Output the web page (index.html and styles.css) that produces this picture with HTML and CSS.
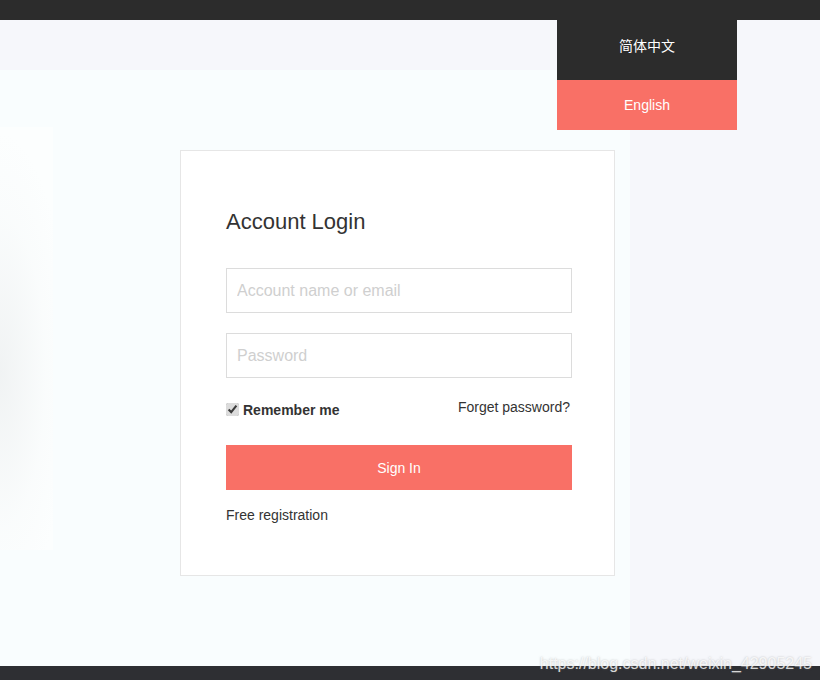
FILE: index.html
```html
<!DOCTYPE html>
<html lang="en">
<head>
<meta charset="utf-8">
<title>Account Login</title>
<link rel="stylesheet" href="styles.css">
</head>
<body>
<div class="topbar"></div>
<div class="page">
  <div class="header"></div>
  <div class="body-row">
    <main class="stage">
      <div class="deco"></div>
      <form class="card">
        <h1 class="title">Account Login</h1>
        <input class="field" type="text" placeholder="Account name or email">
        <input class="field" type="password" placeholder="Password">
        <div class="options">
          <label class="remember"><input type="checkbox" checked> Remember me</label>
          <a class="forget" href="#">Forget password?</a>
        </div>
        <button class="signin" type="button">Sign In</button>
        <a class="register" href="#">Free registration</a>
      </form>
    </main>
    <aside class="side"></aside>
  </div>
  <ul class="lang-menu">
    <li class="lang">简体中文</li>
    <li class="lang active">English</li>
  </ul>
  <div class="watermark">https://blog.csdn.net/weixin_42905245</div>
</div>
<div class="footer"></div>
</body>
</html>
```

FILE: styles.css
```css
* { box-sizing: border-box; }
html, body { margin: 0; padding: 0; }
body {
  width: 820px;
  height: 680px;
  display: flex;
  flex-direction: column;
  font-family: "Liberation Sans", Arial, "Noto Sans CJK SC", sans-serif;
  color: #333;
  background: #f6f7fb;
  overflow: hidden;
}
.topbar { height: 20px; background: #2c2c2c; flex: none; }
.footer { height: 14px; background: #2e2f33; flex: none; }
.page {
  flex: 1;
  position: relative;
  display: flex;
  flex-direction: column;
}
.header { height: 50px; background: #f6f7fb; flex: none; }
.body-row { flex: 1; display: flex; }
.stage {
  width: 630px;
  background: #f9fdfe;
  display: flex;
  align-items: flex-start;
}
.side { flex: 1; background: #f6f7fb; }
.deco {
  width: 53px;
  height: 423px;
  margin-top: 57px;
  background:
    radial-gradient(ellipse 70px 240px at 0 245px, rgba(210, 214, 216, 0.28), rgba(230, 234, 236, 0.1) 65%, rgba(255,255,255,0) 100%),
    #fcfefe;
}
.card {
  margin: 80px 0 0 127px;
  width: 435px;
  height: 426px;
  background: #fff;
  border: 1px solid #e6e6e6;
  padding: 56px 42px 0 45px;
  display: flex;
  flex-direction: column;
}
.title {
  margin: 0 0 31px;
  font-size: 22px;
  font-weight: normal;
  line-height: 30px;
  color: #333;
}
.field {
  display: block;
  width: 346px;
  height: 45px;
  margin: 0 0 20px;
  padding: 0 10px;
  border: 1px solid #dcdcdc;
  border-radius: 0;
  background: #fff;
  font: 16px "Liberation Sans", Arial, sans-serif;
  color: #333;
  outline: none;
}
.field::placeholder { color: #cfcfcf; }
.options {
  display: flex;
  justify-content: space-between;
  align-items: center;
  width: 346px;
  height: 20px;
  margin: 0 0 27px;
  font-size: 14px;
}
.remember {
  display: flex;
  align-items: center;
  gap: 4px;
  font-weight: bold;
  color: #333;
  margin-top: 3px;
}
.remember input {
  margin: 0;
  width: 13px;
  height: 13px;
  accent-color: #dcdcdc;
}
.forget {
  color: #333;
  text-decoration: none;
  margin-right: 2px;
  margin-top: -2px;
}
.signin {
  width: 346px;
  height: 45px;
  border: 0;
  border-radius: 0;
  background: #f97066;
  color: #fff;
  font: 14px "Liberation Sans", Arial, sans-serif;
  cursor: pointer;
  margin: 0 0 17px;
}
.register {
  font-size: 14px;
  color: #333;
  text-decoration: none;
  line-height: 16px;
}
.lang-menu {
  position: absolute;
  top: 0;
  right: 83px;
  width: 180px;
  margin: 0;
  padding: 0;
  list-style: none;
  font-size: 14px;
  color: #fff;
}
.lang {
  height: 60px;
  display: flex;
  align-items: center;
  justify-content: center;
  background: #2c2c2c;
  padding-bottom: 10px;
  font-family: "Noto Sans CJK SC", "Liberation Sans", sans-serif;
}
.lang.active {
  height: 50px;
  padding-bottom: 0;
  background: #f97066;
  font-family: "Liberation Sans", Arial, sans-serif;
}
.watermark {
  position: absolute;
  right: 8px;
  bottom: -7px;
  font-size: 16px;
  color: rgba(255, 255, 255, 0.8);
  text-shadow: 0 0 2px rgba(130, 130, 130, 0.5);
  white-space: nowrap;
  pointer-events: none;
}
```
